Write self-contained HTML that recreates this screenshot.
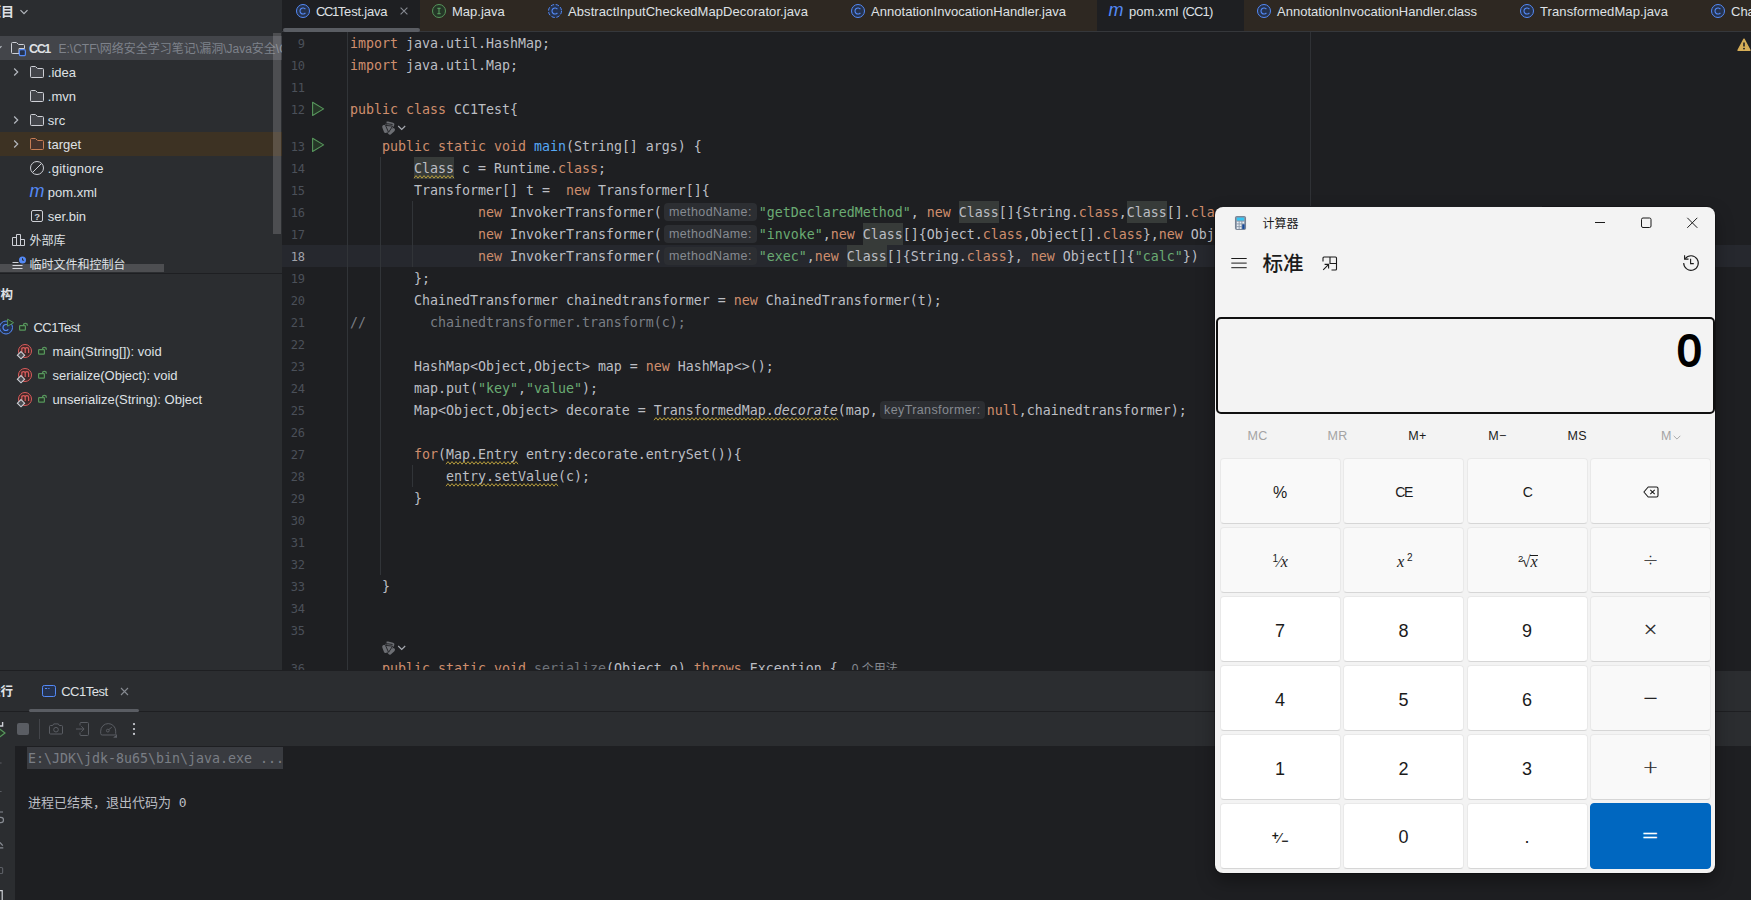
<!DOCTYPE html>
<html lang="zh-CN">
<head>
<meta charset="utf-8">
<title>CC1Test</title>
<style>
*{box-sizing:border-box;margin:0;padding:0}
html,body{width:1751px;height:900px;overflow:hidden;background:#1e1f22}
body{position:relative;font-family:"Liberation Sans","Noto Sans CJK SC",sans-serif;font-size:13px;color:#dfe1e5}
.abs{position:absolute}
svg{position:absolute;overflow:visible}
/* ---------- sidebar ---------- */
#side{position:absolute;left:0;top:0;width:282px;height:670px;background:#2b2d30;overflow:hidden}
.row{position:absolute;left:0;width:282px;height:24px;line-height:24px;white-space:nowrap}
.row span{position:absolute;top:1px}
.cj{font-size:12px}
.chev{stroke:#b4b8bf;stroke-width:1.2;fill:none}
.fold{stroke:#ced0d6;stroke-width:1;fill:#43454a}
/* ---------- editor ---------- */
#ed{position:absolute;left:282px;top:0;width:1469px;height:670px;background:#1e1f22;overflow:hidden}
.tab{position:absolute;top:0;height:31px;background:#2e2822}
.tab span{position:absolute;top:0;line-height:23px;white-space:nowrap;color:#dfe1e5}
.code{position:absolute;left:68px;height:22px;line-height:22px;white-space:pre;font-family:"DejaVu Sans Mono","Liberation Mono","Noto Sans CJK SC",monospace;font-size:13.29px;color:#bcbec4}
.num{position:absolute;left:0;width:23.1px;text-align:right;height:22px;line-height:22px;font-family:"DejaVu Sans Mono","Liberation Mono",monospace;font-size:12px;color:#4b5059}
.k{color:#cf8e6d}.s{color:#6aab73}.f{color:#56a8f5}.c{color:#7a7e85}
.hint{display:inline-block;height:18px;line-height:18px;border-radius:4px;background:#2c2e32;color:#868a91;font-family:"Liberation Sans",sans-serif;font-size:12.5px;letter-spacing:.4px;text-align:center;vertical-align:middle;position:relative;top:-1px}
/* ---------- bottom ---------- */
#bot{position:absolute;left:0;top:670px;width:1751px;height:230px;background:#2b2d30;overflow:hidden}
/* ---------- calculator ---------- */
#calc{position:absolute;left:1215px;top:207px;width:500px;height:666px;background:#f3f3f3;border-radius:8px;color:#1b1b1b;overflow:hidden;box-shadow:0 0 0 1px rgba(0,0,0,.25),0 8px 18px rgba(0,0,0,.35)}
.cb{position:absolute;width:121px;height:66px;border-radius:4px;background:#f9f9f9;border:1px solid #e9e9e9;border-bottom-color:#d6d6d6;text-align:center;line-height:67px;font-size:18px;color:#1b1b1b}
.cb.n{background:#fff}
.mem{position:absolute;top:220px;width:60px;text-align:center;font-size:12.5px;line-height:18px;color:#1b1b1b}
</style>
</head>
<body>
<div id="side">
<!-- header -->
<div class="abs" style="left:-12px;top:0;height:24px;line-height:24px;font-weight:bold;color:#dfe1e5;white-space:nowrap">项目</div>
<svg style="left:19px;top:7px" width="10" height="10" viewBox="0 0 10 10"><path class="chev" d="M1.5 3.2 L5 6.7 L8.5 3.2"/></svg>
<!-- selected + highlighted rows -->
<div class="abs" style="left:0;top:36px;width:282px;height:24px;background:#43454a"></div>
<div class="abs" style="left:0;top:132px;width:282px;height:24px;background:#3d3223"></div>
<!-- CC1 -->
<div class="row" style="top:36px">
<svg style="left:-7px;top:7px" width="10" height="10" viewBox="0 0 10 10"><path class="chev" d="M1.5 3.2 L5 6.7 L8.5 3.2"/></svg>
<svg style="left:10px;top:4px" width="17" height="17" viewBox="0 0 17 17"><path d="M1.5 3.5a1 1 0 0 1 1-1h3.6a1 1 0 0 1 .7.3l1.4 1.4a1 1 0 0 0 .7.3h4.6a1 1 0 0 1 1 1v3h-5.5v5h-6.5a1 1 0 0 1-1-1z" fill="#43454a" stroke="#ced0d6"/><rect x="9.4" y="9.7" width="6" height="6" rx="1.3" fill="#25324d" stroke="#548af7" stroke-width="1.2"/></svg>
<span style="left:29px;font-weight:bold;color:#dfe1e5;font-size:12.5px;letter-spacing:-1.4px">CC1</span>
<span style="left:58.5px;color:#7e828a;font-size:12px">E:\CTF\网络安全学习笔记\漏洞\Java安全\CC1</span>
</div>
<!-- .idea -->
<div class="row" style="top:60px">
<svg style="left:11px;top:7px" width="10" height="10" viewBox="0 0 10 10"><path class="chev" d="M3.2 1.5 L6.7 5 L3.2 8.5"/></svg>
<svg style="left:29px;top:4px" width="16" height="16" viewBox="0 0 16 16"><path class="fold" d="M1.5 3.5a1 1 0 0 1 1-1h3.6a1 1 0 0 1 .7.3l1.4 1.4a1 1 0 0 0 .7.3h4.6a1 1 0 0 1 1 1v7a1 1 0 0 1-1 1h-11a1 1 0 0 1-1-1z"/></svg>
<span style="left:47.8px">.idea</span>
</div>
<!-- .mvn -->
<div class="row" style="top:84px">
<svg style="left:29px;top:4px" width="16" height="16" viewBox="0 0 16 16"><path class="fold" d="M1.5 3.5a1 1 0 0 1 1-1h3.6a1 1 0 0 1 .7.3l1.4 1.4a1 1 0 0 0 .7.3h4.6a1 1 0 0 1 1 1v7a1 1 0 0 1-1 1h-11a1 1 0 0 1-1-1z"/></svg>
<span style="left:47.8px">.mvn</span>
</div>
<!-- src -->
<div class="row" style="top:108px">
<svg style="left:11px;top:7px" width="10" height="10" viewBox="0 0 10 10"><path class="chev" d="M3.2 1.5 L6.7 5 L3.2 8.5"/></svg>
<svg style="left:29px;top:4px" width="16" height="16" viewBox="0 0 16 16"><path class="fold" d="M1.5 3.5a1 1 0 0 1 1-1h3.6a1 1 0 0 1 .7.3l1.4 1.4a1 1 0 0 0 .7.3h4.6a1 1 0 0 1 1 1v7a1 1 0 0 1-1 1h-11a1 1 0 0 1-1-1z"/></svg>
<span style="left:47.8px">src</span>
</div>
<!-- target -->
<div class="row" style="top:132px">
<svg style="left:11px;top:7px" width="10" height="10" viewBox="0 0 10 10"><path class="chev" d="M3.2 1.5 L6.7 5 L3.2 8.5"/></svg>
<svg style="left:29px;top:4px" width="16" height="16" viewBox="0 0 16 16"><path d="M1.5 3.5a1 1 0 0 1 1-1h3.6a1 1 0 0 1 .7.3l1.4 1.4a1 1 0 0 0 .7.3h4.6a1 1 0 0 1 1 1v7a1 1 0 0 1-1 1h-11a1 1 0 0 1-1-1z" fill="#45322b" stroke="#c77d55"/></svg>
<span style="left:47.8px">target</span>
</div>
<!-- .gitignore -->
<div class="row" style="top:156px">
<svg style="left:29px;top:4px" width="16" height="16" viewBox="0 0 16 16"><circle cx="8" cy="8" r="6.5" fill="none" stroke="#ced0d6"/><path d="M3.6 12.4 L12.4 3.6" stroke="#ced0d6" fill="none"/></svg>
<span style="left:47.8px;letter-spacing:.25px">.gitignore</span>
</div>
<!-- pom.xml -->
<div class="row" style="top:180px">
<span style="left:29.5px;top:-1.5px;font-style:italic;font-size:18px;color:#548af7">m</span>
<span style="left:47.8px">pom.xml</span>
</div>
<!-- ser.bin -->
<div class="row" style="top:204px">
<svg style="left:29px;top:4px" width="16" height="16" viewBox="0 0 16 16"><rect x="2.5" y="2.5" width="11" height="11" rx="1.5" fill="none" stroke="#ced0d6"/></svg>
<span style="left:34.2px;font-size:9.5px;font-weight:bold;color:#ced0d6">?</span>
<span style="left:47.8px">ser.bin</span>
</div>
<!-- external libs -->
<div class="row" style="top:228px">
<svg style="left:11px;top:4px" width="16" height="16" viewBox="0 0 16 16"><path d="M1.5 13.5v-8h4v8zM5.5 13.5v-11h4v11zM9.5 13.5v-6h4v6z" fill="none" stroke="#ced0d6" stroke-linejoin="round"/></svg>
<span class="cj" style="left:29.5px">外部库</span>
</div>
<!-- scratches -->
<div class="row" style="top:252px">
<svg style="left:11px;top:4px" width="16" height="16" viewBox="0 0 16 16"><path d="M1.5 6.5h6M1.5 9.5h10M1.5 12.5h10" stroke="#ced0d6" fill="none"/><circle cx="11.5" cy="4" r="3.5" fill="#548af7"/><path d="M11.5 2.2v2h1.6" stroke="#2b2d30" stroke-width="1" fill="none"/></svg>
<span class="cj" style="left:29.5px">临时文件和控制台</span>
</div>
<!-- scrollbars -->
<div class="abs" style="left:273px;top:33px;width:8px;height:201px;background:rgba(255,255,255,.16)"></div>
<div class="abs" style="left:0;top:264px;width:164px;height:8px;background:rgba(255,255,255,.16)"></div>
<!-- divider -->
<div class="abs" style="left:0;top:273px;width:282px;height:1px;background:#1e1f22"></div>
<!-- structure header -->
<div class="abs" style="left:-12px;top:283px;height:24px;line-height:24px;font-weight:bold;font-size:12.5px;white-space:nowrap">结构</div>
<!-- structure tree -->
<div class="row" style="top:315px">
<svg style="left:-2px;top:2.5px" width="17" height="17" viewBox="0 0 17 17"><circle cx="8" cy="9.5" r="6.5" fill="#25324d" stroke="#548af7"/><path d="M10.3 7.6a3 3 0 1 0 0 3.8" fill="none" stroke="#548af7" stroke-width="1.2"/><path d="M9.6 1.2 L15.6 4.7 L9.6 8.2z" fill="#253627" stroke="#57965c" stroke-linejoin="round"/></svg>
<svg style="left:18.5px;top:6.4px" width="10" height="10" viewBox="0 0 10 10"><rect x="0.6" y="4.6" width="5.8" height="4.6" rx=".6" fill="#253627" stroke="#57965c" stroke-width="1.2"/><path d="M4.5 4.5V4.3a1.9 1.9 0 0 1 3.8 0v.4" fill="none" stroke="#57965c" stroke-width="1.2"/></svg>
<span style="left:33.4px;letter-spacing:-.5px">CC1Test</span>
</div>
<div class="row" style="top:339px">
<svg style="left:17px;top:4px" width="17" height="17" viewBox="0 0 17 17"><circle cx="8" cy="8" r="6.5" fill="#402929" stroke="#db5c5c"/><path d="M4.8 10V4.7M4.8 6.4a1.7 1.7 0 0 1 3.4 0V10M8.2 6.4a1.7 1.7 0 0 1 3.4 0V10" fill="none" stroke="#db5c5c" stroke-width="1.2"/><path d="M4 8.6 L7.6 12.2 L4 15.8 L.4 12.2z" fill="#4a4c51" stroke="#ced0d6" stroke-width="1.1"/></svg>
<svg style="left:37.5px;top:6.4px" width="10" height="10" viewBox="0 0 10 10"><rect x="0.6" y="4.6" width="5.8" height="4.6" rx=".6" fill="#253627" stroke="#57965c" stroke-width="1.2"/><path d="M4.5 4.5V4.3a1.9 1.9 0 0 1 3.8 0v.4" fill="none" stroke="#57965c" stroke-width="1.2"/></svg>
<span style="left:52.6px">main(String[]): void</span>
</div>
<div class="row" style="top:363px">
<svg style="left:17px;top:4px" width="17" height="17" viewBox="0 0 17 17"><circle cx="8" cy="8" r="6.5" fill="#402929" stroke="#db5c5c"/><path d="M4.8 10V4.7M4.8 6.4a1.7 1.7 0 0 1 3.4 0V10M8.2 6.4a1.7 1.7 0 0 1 3.4 0V10" fill="none" stroke="#db5c5c" stroke-width="1.2"/><path d="M4 8.6 L7.6 12.2 L4 15.8 L.4 12.2z" fill="#4a4c51" stroke="#ced0d6" stroke-width="1.1"/></svg>
<svg style="left:37.5px;top:6.4px" width="10" height="10" viewBox="0 0 10 10"><rect x="0.6" y="4.6" width="5.8" height="4.6" rx=".6" fill="#253627" stroke="#57965c" stroke-width="1.2"/><path d="M4.5 4.5V4.3a1.9 1.9 0 0 1 3.8 0v.4" fill="none" stroke="#57965c" stroke-width="1.2"/></svg>
<span style="left:52.6px">serialize(Object): void</span>
</div>
<div class="row" style="top:387px">
<svg style="left:17px;top:4px" width="17" height="17" viewBox="0 0 17 17"><circle cx="8" cy="8" r="6.5" fill="#402929" stroke="#db5c5c"/><path d="M4.8 10V4.7M4.8 6.4a1.7 1.7 0 0 1 3.4 0V10M8.2 6.4a1.7 1.7 0 0 1 3.4 0V10" fill="none" stroke="#db5c5c" stroke-width="1.2"/><path d="M4 8.6 L7.6 12.2 L4 15.8 L.4 12.2z" fill="#4a4c51" stroke="#ced0d6" stroke-width="1.1"/></svg>
<svg style="left:37.5px;top:6.4px" width="10" height="10" viewBox="0 0 10 10"><rect x="0.6" y="4.6" width="5.8" height="4.6" rx=".6" fill="#253627" stroke="#57965c" stroke-width="1.2"/><path d="M4.5 4.5V4.3a1.9 1.9 0 0 1 3.8 0v.4" fill="none" stroke="#57965c" stroke-width="1.2"/></svg>
<span style="left:52.6px">unserialize(String): Object</span>
</div>

</div>
<div id="ed">
<!--ED0-->
<div class="abs" style="left:138px;top:0;width:1331px;height:31px;background:#2e2822"></div>
<div class="abs" style="left:815px;top:0;width:147px;height:31px;background:#1e1f22"></div>
<div class="abs" style="left:0;top:31px;width:1469px;height:1px;background:#35373b"></div>
<div class="abs" style="left:1px;top:28px;width:137px;height:4px;border-radius:2px;background:#5a5d63"></div>
<svg style="left:13px;top:3px" width="16" height="16" viewBox="0 0 16 16"><circle cx="8" cy="8" r="6.5" fill="#25324d" stroke="#548af7"/><path d="M10.4 6.2a3 3 0 1 0 0 3.6" fill="none" stroke="#548af7" stroke-width="1.1"/></svg>
<div class="abs" style="left:34px;top:0;line-height:23px;white-space:nowrap;letter-spacing:-.2px"><span style="letter-spacing:-1.4px">CC1</span>Test.java</div>
<svg style="left:149px;top:3px" width="16" height="16" viewBox="0 0 16 16"><circle cx="8" cy="8" r="6.5" fill="#253627" stroke="#57965c"/><path d="M6.4 5.4h3.2M6.4 10.6h3.2M8 5.4v5.2" fill="none" stroke="#57965c" stroke-width="1.1"/></svg>
<div class="abs" style="left:170px;top:0;line-height:23px;white-space:nowrap;letter-spacing:0px">Map.java</div>
<svg style="left:265px;top:3px" width="16" height="16" viewBox="0 0 16 16"><circle cx="8" cy="8" r="6.5" fill="#25324d" stroke="#548af7" stroke-dasharray="3.4 1.7"/><path d="M10.4 6.2a3 3 0 1 0 0 3.6" fill="none" stroke="#548af7" stroke-width="1.1"/></svg>
<div class="abs" style="left:286px;top:0;line-height:23px;white-space:nowrap;letter-spacing:.08px">AbstractInputCheckedMapDecorator.java</div>
<svg style="left:568px;top:3px" width="16" height="16" viewBox="0 0 16 16"><circle cx="8" cy="8" r="6.5" fill="#25324d" stroke="#548af7"/><path d="M10.4 6.2a3 3 0 1 0 0 3.6" fill="none" stroke="#548af7" stroke-width="1.1"/></svg>
<div class="abs" style="left:589px;top:0;line-height:23px;white-space:nowrap;letter-spacing:.04px">AnnotationInvocationHandler.java</div>
<div class="abs" style="left:826.5999999999999px;top:-1px;line-height:23px;font-style:italic;font-size:18px;color:#548af7">m</div>
<div class="abs" style="left:847px;top:0;line-height:23px;white-space:nowrap;letter-spacing:.05px">pom.xml <span style="letter-spacing:-.9px">(CC1)</span></div>
<svg style="left:974px;top:3px" width="16" height="16" viewBox="0 0 16 16"><circle cx="8" cy="8" r="6.5" fill="#25324d" stroke="#548af7"/><path d="M10.4 6.2a3 3 0 1 0 0 3.6" fill="none" stroke="#548af7" stroke-width="1.1"/></svg>
<div class="abs" style="left:995px;top:0;line-height:23px;white-space:nowrap;letter-spacing:.02px">AnnotationInvocationHandler.class</div>
<svg style="left:1237px;top:3px" width="16" height="16" viewBox="0 0 16 16"><circle cx="8" cy="8" r="6.5" fill="#25324d" stroke="#548af7"/><path d="M10.4 6.2a3 3 0 1 0 0 3.6" fill="none" stroke="#548af7" stroke-width="1.1"/></svg>
<div class="abs" style="left:1258px;top:0;line-height:23px;white-space:nowrap;letter-spacing:.11px">TransformedMap.java</div>
<svg style="left:1428px;top:3px" width="16" height="16" viewBox="0 0 16 16"><circle cx="8" cy="8" r="6.5" fill="#25324d" stroke="#548af7"/><path d="M10.4 6.2a3 3 0 1 0 0 3.6" fill="none" stroke="#548af7" stroke-width="1.1"/></svg>
<div class="abs" style="left:1449px;top:0;line-height:23px;white-space:nowrap;letter-spacing:0px">ChainedTransformer.java</div>
<svg style="left:117px;top:6px" width="10" height="10" viewBox="0 0 10 10"><path d="M1.6 1.6L8.4 8.4M8.4 1.6L1.6 8.4" stroke="#868a91" stroke-width="1.1" fill="none"/></svg>
<div class="abs" style="left:0;top:245px;width:1469px;height:22px;background:#26282e"></div>
<div class="abs" style="left:65px;top:32px;width:1px;height:640px;background:#313438"></div>
<div class="abs" style="left:1028px;top:32px;width:1px;height:640px;background:#2f3135"></div>
<div class="abs" style="left:98px;top:157px;width:1px;height:418px;background:#313438"></div>
<div class="abs" style="left:130px;top:201px;width:1px;height:66px;background:#313438"></div>
<div class="abs" style="left:130px;top:465px;width:1px;height:22px;background:#313438"></div>
<div class="abs" style="left:132px;top:157px;width:40px;height:22px;background:#373b39"></div>
<div class="abs" style="left:677px;top:201px;width:40px;height:22px;background:#373b39"></div>
<div class="abs" style="left:845px;top:201px;width:40px;height:22px;background:#373b39"></div>
<div class="abs" style="left:581px;top:223px;width:40px;height:22px;background:#373b39"></div>
<div class="abs" style="left:565px;top:245px;width:40px;height:22px;background:#373b39"></div>
<div class="abs" style="left:940px;top:206px;width:320px;height:1px;background:#1e1f22;z-index:3"></div>
<svg style="left:132px;top:174.6px;z-index:2" width="40" height="4" viewBox="0 0 40 4"><path d="M0 3.2L2 0.6L4 3.2L6 0.6L8 3.2L10 0.6L12 3.2L14 0.6L16 3.2L18 0.6L20 3.2L22 0.6L24 3.2L26 0.6L28 3.2L30 0.6L32 3.2L34 0.6L36 3.2L38 0.6L40 3.2" fill="none" stroke="#b39a3c" stroke-width="1"/></svg>
<svg style="left:372px;top:416.6px;z-index:2" width="184" height="4" viewBox="0 0 184 4"><path d="M0 3.2L2 0.6L4 3.2L6 0.6L8 3.2L10 0.6L12 3.2L14 0.6L16 3.2L18 0.6L20 3.2L22 0.6L24 3.2L26 0.6L28 3.2L30 0.6L32 3.2L34 0.6L36 3.2L38 0.6L40 3.2L42 0.6L44 3.2L46 0.6L48 3.2L50 0.6L52 3.2L54 0.6L56 3.2L58 0.6L60 3.2L62 0.6L64 3.2L66 0.6L68 3.2L70 0.6L72 3.2L74 0.6L76 3.2L78 0.6L80 3.2L82 0.6L84 3.2L86 0.6L88 3.2L90 0.6L92 3.2L94 0.6L96 3.2L98 0.6L100 3.2L102 0.6L104 3.2L106 0.6L108 3.2L110 0.6L112 3.2L114 0.6L116 3.2L118 0.6L120 3.2L122 0.6L124 3.2L126 0.6L128 3.2L130 0.6L132 3.2L134 0.6L136 3.2L138 0.6L140 3.2L142 0.6L144 3.2L146 0.6L148 3.2L150 0.6L152 3.2L154 0.6L156 3.2L158 0.6L160 3.2L162 0.6L164 3.2L166 0.6L168 3.2L170 0.6L172 3.2L174 0.6L176 3.2L178 0.6L180 3.2L182 0.6L184 3.2" fill="none" stroke="#b39a3c" stroke-width="1"/></svg>
<svg style="left:164px;top:460.6px;z-index:2" width="72" height="4" viewBox="0 0 72 4"><path d="M0 3.2L2 0.6L4 3.2L6 0.6L8 3.2L10 0.6L12 3.2L14 0.6L16 3.2L18 0.6L20 3.2L22 0.6L24 3.2L26 0.6L28 3.2L30 0.6L32 3.2L34 0.6L36 3.2L38 0.6L40 3.2L42 0.6L44 3.2L46 0.6L48 3.2L50 0.6L52 3.2L54 0.6L56 3.2L58 0.6L60 3.2L62 0.6L64 3.2L66 0.6L68 3.2L70 0.6L72 3.2" fill="none" stroke="#b39a3c" stroke-width="1"/></svg>
<svg style="left:164px;top:482.6px;z-index:2" width="112" height="4" viewBox="0 0 112 4"><path d="M0 3.2L2 0.6L4 3.2L6 0.6L8 3.2L10 0.6L12 3.2L14 0.6L16 3.2L18 0.6L20 3.2L22 0.6L24 3.2L26 0.6L28 3.2L30 0.6L32 3.2L34 0.6L36 3.2L38 0.6L40 3.2L42 0.6L44 3.2L46 0.6L48 3.2L50 0.6L52 3.2L54 0.6L56 3.2L58 0.6L60 3.2L62 0.6L64 3.2L66 0.6L68 3.2L70 0.6L72 3.2L74 0.6L76 3.2L78 0.6L80 3.2L82 0.6L84 3.2L86 0.6L88 3.2L90 0.6L92 3.2L94 0.6L96 3.2L98 0.6L100 3.2L102 0.6L104 3.2L106 0.6L108 3.2L110 0.6L112 3.2" fill="none" stroke="#b39a3c" stroke-width="1"/></svg>
<div class="num" style="top:33px">9</div>
<div class="code" style="top:33px"><span class="k">import</span> java.util.HashMap;</div>
<div class="num" style="top:55px">10</div>
<div class="code" style="top:55px"><span class="k">import</span> java.util.Map;</div>
<div class="num" style="top:77px">11</div>
<div class="num" style="top:99px">12</div>
<div class="code" style="top:99px"><span class="k">public class</span> CC1Test{</div>
<div class="num" style="top:136px">13</div>
<div class="code" style="top:136px">    <span class="k">public static void</span> <span class="f">main</span>(String[] args) {</div>
<div class="num" style="top:158px">14</div>
<div class="code" style="top:158px">        Class c = Runtime.<span class="k">class</span>;</div>
<div class="num" style="top:180px">15</div>
<div class="code" style="top:180px">        Transformer[] t =  <span class="k">new</span> Transformer[]{</div>
<div class="num" style="top:202px">16</div>
<div class="code" style="top:202px">                <span class="k">new</span> InvokerTransformer(<span class="hint" style="width:93px;margin:0 2px">methodName:</span><span class="s">"getDeclaredMethod"</span>, <span class="k">new</span> Class[]{String.<span class="k">class</span>,Class[].<span class="k">class</span>}, <span class="k">new</span> Object[]{<span class="s">"getRuntime"</span>,<span class="k">null</span>}),</div>
<div class="num" style="top:224px">17</div>
<div class="code" style="top:224px">                <span class="k">new</span> InvokerTransformer(<span class="hint" style="width:93px;margin:0 2px">methodName:</span><span class="s">"invoke"</span>,<span class="k">new</span> Class[]{Object.<span class="k">class</span>,Object[].<span class="k">class</span>},<span class="k">new</span> Object[]{<span class="k">null</span>,<span class="k">null</span>}),</div>
<div class="num" style="color:#a1a3ab;top:246px">18</div>
<div class="code" style="top:246px">                <span class="k">new</span> InvokerTransformer(<span class="hint" style="width:93px;margin:0 2px">methodName:</span><span class="s">"exec"</span>,<span class="k">new</span> Class[]{String.<span class="k">class</span>}, <span class="k">new</span> Object[]{<span class="s">"calc"</span>})</div>
<div class="num" style="top:268px">19</div>
<div class="code" style="top:268px">        };</div>
<div class="num" style="top:290px">20</div>
<div class="code" style="top:290px">        ChainedTransformer chainedtransformer = <span class="k">new</span> ChainedTransformer(t);</div>
<div class="num" style="top:312px">21</div>
<div class="code" style="top:312px"><span class="c">//        chainedtransformer.transform(c);</span></div>
<div class="num" style="top:334px">22</div>
<div class="num" style="top:356px">23</div>
<div class="code" style="top:356px">        HashMap&lt;Object,Object&gt; map = <span class="k">new</span> HashMap&lt;&gt;();</div>
<div class="num" style="top:378px">24</div>
<div class="code" style="top:378px">        map.put(<span class="s">"key"</span>,<span class="s">"value"</span>);</div>
<div class="num" style="top:400px">25</div>
<div class="code" style="top:400px">        Map&lt;Object,Object&gt; decorate = TransformedMap.<i>decorate</i>(map,<span class="hint" style="width:105px;margin:0 2px">keyTransformer:</span><span class="k">null</span>,chainedtransformer);</div>
<div class="num" style="top:422px">26</div>
<div class="num" style="top:444px">27</div>
<div class="code" style="top:444px">        <span class="k">for</span>(Map.Entry entry:decorate.entrySet()){</div>
<div class="num" style="top:466px">28</div>
<div class="code" style="top:466px">            entry.setValue(c);</div>
<div class="num" style="top:488px">29</div>
<div class="code" style="top:488px">        }</div>
<div class="num" style="top:510px">30</div>
<div class="num" style="top:532px">31</div>
<div class="num" style="top:554px">32</div>
<div class="num" style="top:576px">33</div>
<div class="code" style="top:576px">    }</div>
<div class="num" style="top:598px">34</div>
<div class="num" style="top:620px">35</div>
<div class="num" style="top:658px">36</div>
<div class="code" style="top:658px">    <span class="k">public static void</span> <span style="color:#6f737a">serialize</span>(Object o) <span class="k">throws</span> Exception {<span style="font-family:'Liberation Sans','Noto Sans CJK SC',sans-serif;font-size:12px;color:#868a91;margin-left:14px">0 个用法</span></div>
<svg style="left:29px;top:101px" width="15" height="16" viewBox="0 0 15 16"><path d="M1.6 1.3 L12.6 7.9 L1.6 14.5z" fill="#253627" stroke="#57965c" stroke-width="1.1" stroke-linejoin="round"/></svg>
<svg style="left:29px;top:137px" width="15" height="16" viewBox="0 0 15 16"><path d="M1.6 1.3 L12.6 7.9 L1.6 14.5z" fill="#253627" stroke="#57965c" stroke-width="1.1" stroke-linejoin="round"/></svg>
<svg style="left:99.80000000000001px;top:120.6px" width="26" height="14" viewBox="0 0 26 14"><g stroke="#6c6e73" stroke-linecap="round" fill="none" stroke-width="3.6"><path d="M5.6 2.3 L10.6 3.5"/><path d="M2 5.8 L3.6 10.2"/><path d="M11.2 8.8 L7.8 11.8"/></g><path d="M3.4 4.2 L10.9 5 L6.5 11.6Z" fill="#6c6e73" stroke="#6c6e73" stroke-width="1.6" stroke-linejoin="round"/><g fill="none" stroke="#1e1f22" stroke-width=".9"><path d="M3.5 4.4 L10.6 5.1 L6.6 11.3Z"/><path d="M5.2 2.7 L10.6 3.5M4.4 1.4 L4.9 3.8"/></g><path d="M16.2 5 L19.7 8.5 L23.2 5" fill="none" stroke="#a8abb2" stroke-width="1.15"/></svg>
<svg style="left:99.80000000000001px;top:640.6px" width="26" height="14" viewBox="0 0 26 14"><g stroke="#6c6e73" stroke-linecap="round" fill="none" stroke-width="3.6"><path d="M5.6 2.3 L10.6 3.5"/><path d="M2 5.8 L3.6 10.2"/><path d="M11.2 8.8 L7.8 11.8"/></g><path d="M3.4 4.2 L10.9 5 L6.5 11.6Z" fill="#6c6e73" stroke="#6c6e73" stroke-width="1.6" stroke-linejoin="round"/><g fill="none" stroke="#1e1f22" stroke-width=".9"><path d="M3.5 4.4 L10.6 5.1 L6.6 11.3Z"/><path d="M5.2 2.7 L10.6 3.5M4.4 1.4 L4.9 3.8"/></g><path d="M16.2 5 L19.7 8.5 L23.2 5" fill="none" stroke="#a8abb2" stroke-width="1.15"/></svg>
<svg style="left:1454.6px;top:37.8px" width="14" height="14" viewBox="0 0 14 14"><path d="M7 1.2 L13 12.3 H1z" fill="#d6ae58" stroke="#d6ae58" stroke-linejoin="round" stroke-width="1.4"/><path d="M7 4.6v4" stroke="#1e1f22" stroke-width="1.6"/><circle cx="7" cy="10.6" r=".95" fill="#1e1f22"/></svg>
<!--ED1-->
</div>
<div id="bot">
<!--BOT0-->
<div class="abs" style="left:0;top:0;width:1751px;height:1px;background:#1e1f22"></div>
<!-- header -->
<div class="abs" style="left:-12px;top:10px;height:24px;line-height:24px;font-weight:bold;font-size:12.5px;white-space:nowrap">运行</div>
<svg style="left:41px;top:14px" width="16" height="14" viewBox="0 0 16 14"><rect x="1.5" y="1.5" width="13" height="11" rx="1.8" fill="#25324d" stroke="#548af7"/><path d="M4 4.5h2.2M7.3 4.5h1.2" stroke="#548af7" stroke-width="1"/></svg>
<div class="abs" style="left:61.2px;top:10px;height:24px;line-height:24px;white-space:nowrap;letter-spacing:-.5px">CC1Test</div>
<svg style="left:119.5px;top:17px" width="9" height="9" viewBox="0 0 9 9"><path d="M1 1L8 8M8 1L1 8" stroke="#868a91" stroke-width="1.1" fill="none"/></svg>
<div class="abs" style="left:29px;top:39px;width:110px;height:3px;border-radius:1.5px;background:#5a5d63;z-index:2"></div>
<div class="abs" style="left:0;top:41px;width:1751px;height:1px;background:#1e1f22"></div>
<!-- toolbar -->
<svg style="left:-9px;top:50px" width="16" height="20" viewBox="0 0 16 20"><path d="M6.5 7.4 L14 13 L6.5 18.6z" fill="#253627" stroke="#57965c" stroke-width="1.3" stroke-linejoin="round"/><path d="M8 6h3.6V2" fill="none" stroke="#ced0d6" stroke-width="1.4"/></svg>
<div class="abs" style="left:17px;top:53px;width:12px;height:12px;border-radius:2px;background:#5a5d63"></div>
<div class="abs" style="left:39px;top:49px;width:1px;height:20px;background:#43454a"></div>
<svg style="left:48px;top:51px" width="16" height="16" viewBox="0 0 16 16"><path d="M1.5 5.5a1 1 0 0 1 1-1h2.2l1-1.6h4.6l1 1.6h2.2a1 1 0 0 1 1 1v6.5a1 1 0 0 1-1 1h-11a1 1 0 0 1-1-1z" fill="none" stroke="#5a5d63"/><circle cx="8" cy="8.7" r="2.3" fill="none" stroke="#5a5d63"/></svg>
<svg style="left:75px;top:51px" width="16" height="16" viewBox="0 0 16 16"><path d="M5 4.5v-2a1 1 0 0 1 1-1h6.5a1 1 0 0 1 1 1v11a1 1 0 0 1-1 1H6a1 1 0 0 1-1-1v-2" fill="none" stroke="#5a5d63"/><path d="M1 8h8M6.3 5.2L9.1 8 6.3 10.8" fill="none" stroke="#5a5d63"/></svg>
<svg style="left:99px;top:51px" width="19" height="17" viewBox="0 0 19 17"><path d="M1.7 10.1a7.5 7.5 0 0 1 15 0v2.4a1.5 1.5 0 0 1-1.5 1.5h-12a1.5 1.5 0 0 1-1.5-1.5z" fill="none" stroke="#5a5d63"/><circle cx="8.8" cy="9.6" r="1.4" fill="none" stroke="#5a5d63"/><path d="M9.8 8.6l3-2.4" stroke="#5a5d63" fill="none"/><path d="M18 13v3.8h-3.8z" fill="#5a5d63"/></svg>
<svg style="left:132px;top:53px" width="4" height="12" viewBox="0 0 4 12"><circle cx="2" cy="1.1" r="1.1" fill="#ced0d6"/><circle cx="2" cy="6" r="1.1" fill="#ced0d6"/><circle cx="2" cy="10.9" r="1.1" fill="#ced0d6"/></svg>
<!-- console -->
<div class="abs" style="left:0;top:76px;width:1751px;height:154px;background:#1e1f22"></div>
<div class="abs" style="left:0;top:76px;width:15px;height:154px;background:#2b2d30"></div>
<div class="abs" style="left:27px;top:77px;width:256px;height:22px;background:#393b40"></div>
<div class="code" style="left:28px;top:78px;color:#7a7e85">E:\JDK\jdk-8u65\bin\java.exe ...</div>
<div class="code" style="left:28px;top:122px;color:#bcbec4;font-size:13px">进程已结束，退出代码为 0</div>
<!-- cut-off side icons -->
<svg style="left:-8px;top:85px" width="14" height="145" viewBox="0 0 14 145"><g fill="none" stroke="#868a91" stroke-width="1.2"><path d="M7 8h2.6M7 36.5h2.6" stroke="#5a5d63"/><path d="M6 57h5M6 62.3h2.8a2.7 2.7 0 0 1 0 5.4H6"/><path d="M6 92.8h5.3M8 87.5l2.8 3.2"/><rect x="3" y="112.5" width="7.6" height="6" rx="1" stroke="#5a5d63"/><path d="M5 135.6h5.2v10" stroke="#ced0d6"/></g></svg>
<!--BOT1-->
</div>
<div id="calc">
<!--CALC0-->
<svg style="left:20.3px;top:9px" width="11" height="14" viewBox="0 0 12 15"><rect x=".5" y=".5" width="11" height="14" rx="1" fill="#8a97a8" stroke="#6c7a8c"/><rect x="2" y="1.6" width="8" height="3.2" fill="#35c6f4"/><g fill="#e8edf3"><rect x="2" y="6" width="2" height="2"/><rect x="5" y="6" width="2" height="2"/><rect x="8" y="6" width="2" height="2"/><rect x="2" y="9" width="2" height="2"/><rect x="5" y="9" width="2" height="2"/><rect x="2" y="12" width="2" height="2"/><rect x="5" y="12" width="2" height="2"/></g><rect x="8" y="9" width="2.4" height="5" fill="#174a9c"/></svg>
<div class="abs" style="left:47.5px;top:8px;line-height:18px;font-size:12px;color:#1b1b1b;white-space:nowrap">计算器</div>
<svg style="left:379px;top:10px" width="110" height="12" viewBox="0 0 110 12"><g fill="none" stroke="#1b1b1b" stroke-width="1"><path d="M1 5.5h10"/><rect x="47.5" y="1" width="9.5" height="9.5" rx="1.5"/><path d="M93.3 .8l10 10M103.3 .8l-10 10"/></g></svg>
<svg style="left:16px;top:50px" width="16" height="12" viewBox="0 0 16 12"><path d="M.3 1.5h15.4M.3 6.1h15.4M.3 10.7h15.4" stroke="#1b1b1b" stroke-width="1" fill="none"/></svg>
<div class="abs" style="left:47.5px;top:42px;line-height:30px;font-size:20.6px;font-weight:500;color:#1b1b1b;white-space:nowrap">标准</div>
<svg style="left:107px;top:48.5px" width="16" height="16" viewBox="0 0 16 16"><g fill="none" stroke="#1b1b1b" stroke-width="1.1"><path d="M1 5.5V2a1 1 0 0 1 1-1h11.5a1 1 0 0 1 1 1v11a1 1 0 0 1-1 1H9.5"/><path d="M8 1v6.5h6.5"/><path d="M1.2 13.8L6.4 8.6M2.6 8.4h4v4"/></g></svg>
<svg style="left:467px;top:47px" width="18" height="18" viewBox="0 0 18 18"><g fill="none" stroke="#1b1b1b" stroke-width="1.1"><path d="M3.2 4.6A7.3 7.3 0 1 1 1.7 9"/><path d="M2.6 1.2v3.9h3.9"/><path d="M8.6 4.8v4.8h3.2"/></g></svg>
<div class="abs" style="left:.5px;top:109.5px;width:499px;height:97.5px;border:2px solid #101010;border-radius:5px"></div>
<div class="abs" style="right:13.5px;top:113px;line-height:62px;font-size:43.5px;font-weight:normal;-webkit-text-stroke:2px #000;color:#000">0</div>
<div class="mem" style="left:12.600000000000001px;color:#a3a3a3;letter-spacing:.4px">MC</div>
<div class="mem" style="left:92.5px;color:#a3a3a3;letter-spacing:.4px">MR</div>
<div class="mem" style="left:172.4px;color:#1b1b1b;letter-spacing:.4px">M+</div>
<div class="mem" style="left:252.39999999999998px;color:#1b1b1b;letter-spacing:.4px">M−</div>
<div class="mem" style="left:332.3px;color:#1b1b1b;letter-spacing:.4px">MS</div>
<div class="mem" style="left:426px;color:#a3a3a3">M<svg style="position:static;display:inline-block;margin-left:1.5px" width="8" height="5" viewBox="0 0 8 5"><path d="M.7 .8l3.3 3.3L7.3 .8" fill="none" stroke="#a3a3a3" stroke-width=".9"/></svg></div>
<div class="cb" style="left:4.6px;top:251.2px;font-size:16px">%</div>
<div class="cb" style="left:128.07px;top:251.2px;font-size:14px;letter-spacing:-1.5px">CE</div>
<div class="cb" style="left:251.5px;top:251.2px;font-size:14px;letter-spacing:-1.5px">C</div>
<div class="cb" style="left:375px;top:251.2px"><svg style="position:static;display:inline-block;vertical-align:middle;margin-top:-3px" width="16" height="12" viewBox="0 0 16 12"><path d="M5.2 1h8.3a1.5 1.5 0 0 1 1.5 1.5v7a1.5 1.5 0 0 1-1.5 1.5H5.2L.9 6z" fill="none" stroke="#1b1b1b" stroke-width="1.1" stroke-linejoin="round"/><path d="M7.3 3.8l4.4 4.4M11.7 3.8L7.3 8.2" stroke="#1b1b1b" stroke-width="1.1"/></svg></div>
<div class="cb" style="left:4.6px;top:320.1px"><span style="font-family:'Liberation Serif',serif;font-size:16px"><span style="font-family:'Liberation Sans',sans-serif;font-size:10px;position:relative;top:-5px;left:0">1</span>⁄<i>x</i></span></div>
<div class="cb" style="left:128.07px;top:320.1px"><span style="font-family:'Liberation Serif',serif;font-size:16.5px"><i>x</i><span style="font-family:'Liberation Sans',sans-serif;font-size:10px;position:relative;top:-6px;left:2.5px">2</span></span></div>
<div class="cb" style="left:251.5px;top:320.1px"><span style="font-family:'Liberation Serif',serif;font-size:16px"><span style="font-family:'Liberation Sans',sans-serif;font-size:9.5px;position:relative;top:-5.5px;left:1.5px">2</span>√<i style="border-top:1px solid #1b1b1b;line-height:12px;display:inline-block">x</i></span></div>
<div class="cb" style="left:375px;top:320.1px;font-size:18.5px;font-family:'DejaVu Sans','Liberation Sans',sans-serif;font-weight:200;line-height:63px;-webkit-text-stroke:.35px #1b1b1b">÷</div>
<div class="cb n" style="left:4.6px;top:389px;line-height:69px">7</div>
<div class="cb n" style="left:128.07px;top:389px;line-height:69px">8</div>
<div class="cb n" style="left:251.5px;top:389px;line-height:69px">9</div>
<div class="cb" style="left:375px;top:389px;font-size:18.5px;font-family:'DejaVu Sans','Liberation Sans',sans-serif;font-weight:200;line-height:63px;-webkit-text-stroke:.35px #1b1b1b">×</div>
<div class="cb n" style="left:4.6px;top:458px;line-height:69px">4</div>
<div class="cb n" style="left:128.07px;top:458px;line-height:69px">5</div>
<div class="cb n" style="left:251.5px;top:458px;line-height:69px">6</div>
<div class="cb" style="left:375px;top:458px;font-size:18.5px;font-family:'DejaVu Sans','Liberation Sans',sans-serif;font-weight:200;line-height:63px;-webkit-text-stroke:.35px #1b1b1b">−</div>
<div class="cb n" style="left:4.6px;top:526.9px;line-height:69px">1</div>
<div class="cb n" style="left:128.07px;top:526.9px;line-height:69px">2</div>
<div class="cb n" style="left:251.5px;top:526.9px;line-height:69px">3</div>
<div class="cb" style="left:375px;top:526.9px;font-size:18.5px;font-family:'DejaVu Sans','Liberation Sans',sans-serif;font-weight:200;line-height:63px;-webkit-text-stroke:.35px #1b1b1b">+</div>
<div class="cb n" style="left:4.6px;top:595.8px"><span style="font-size:15px"><span style="position:relative;top:-3px;font-size:12px;font-weight:bold">+</span>⁄<span style="position:relative;top:2px;font-size:12px;font-weight:bold">−</span></span></div>
<div class="cb n" style="left:128.07px;top:595.8px;line-height:67px">0</div>
<div class="cb n" style="left:251.5px;top:595.8px">.</div>
<div class="cb" style="left:375px;top:595.8px;background:#0067c0;border-color:#0067c0;color:#fff;font-size:17px;font-family:'DejaVu Sans','Liberation Sans',sans-serif;line-height:63px"><span style="display:inline-block;transform:scaleX(1.27)">=</span></div>
<!--CALC1-->
</div>
</body>
</html>
